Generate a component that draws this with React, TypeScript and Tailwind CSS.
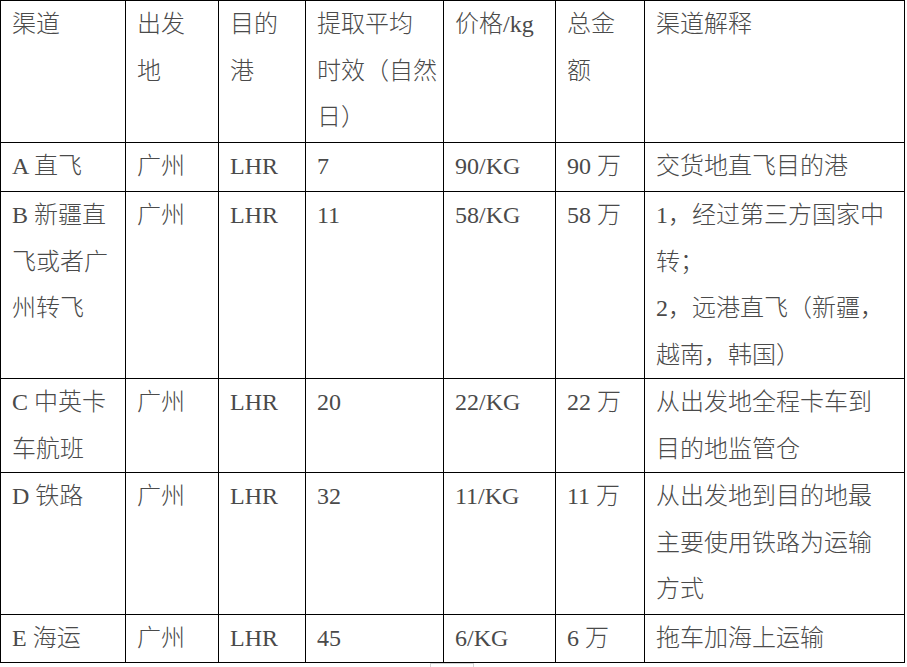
const rows: string[][][] = [
  [["渠道"], ["出发", "地"], ["目的", "港"], ["提取平均", "时效（自然", "日）"], ["价格/kg"], ["总金", "额"], ["渠道解释"]],
  [["A 直飞"], ["广州"], ["LHR"], ["7"], ["90/KG"], ["90 万"], ["交货地直飞目的港"]],
  [
    ["B 新疆直", "飞或者广", "州转飞"],
    ["广州"],
    ["LHR"],
    ["11"],
    ["58/KG"],
    ["58 万"],
    ["1，经过第三方国家中", "转；", "2，远港直飞（新疆，", "越南，韩国）"],
  ],
  [["C 中英卡", "车航班"], ["广州"], ["LHR"], ["20"], ["22/KG"], ["22 万"], ["从出发地全程卡车到", "目的地监管仓"]],
  [
    ["D 铁路"],
    ["广州"],
    ["LHR"],
    ["32"],
    ["11/KG"],
    ["11 万"],
    ["从出发地到目的地最", "主要使用铁路为运输", "方式"],
  ],
  [["E 海运"], ["广州"], ["LHR"], ["45"], ["6/KG"], ["6 万"], ["拖车加海上运输"]],
];

export default function App() {
  return (
    <div className="min-h-screen bg-white font-['Liberation_Serif','Noto_Sans_CJK_SC',serif] text-[24px] font-light leading-[46.7px] text-[#4a4a4a]">
      <div className="grid w-fit grid-cols-[124px_92px_86px_137px_111px_88px_259px] grid-rows-[141px_48px_186px_93px_141px_47px] gap-px border border-black bg-black">
        {rows.map((row, r) =>
          row.map((lines, c) => (
            <div key={`${r}-${c}`} className="overflow-hidden whitespace-nowrap bg-white pl-[11px]">
              {lines.map((line, i) => (
                <div key={i}>{line}</div>
              ))}
            </div>
          )),
        )}
      </div>
      <div className="ml-[430px] h-[4px] w-[44px] border-x border-t border-[#d4d4d4]" />
    </div>
  );
}
